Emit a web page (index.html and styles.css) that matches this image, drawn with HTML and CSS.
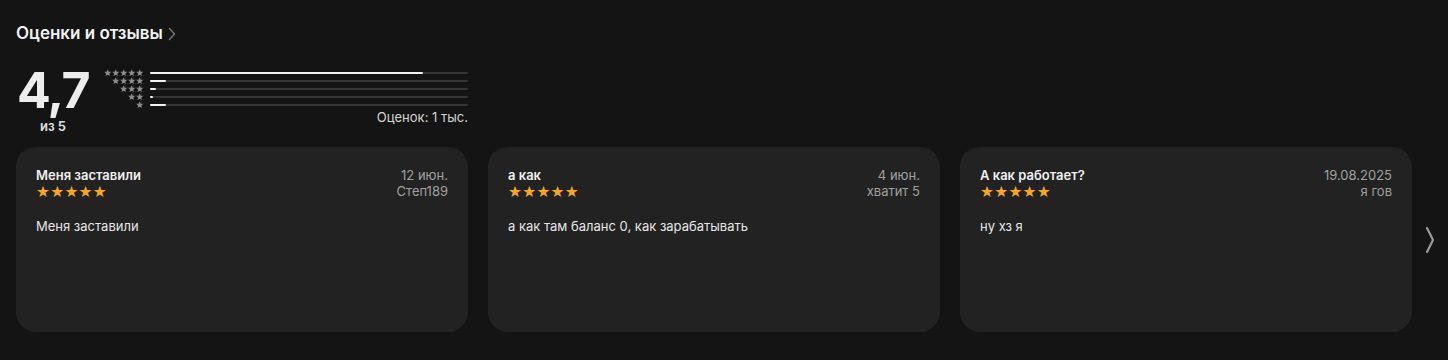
FILE: index.html
```html
<!DOCTYPE html>
<html lang="ru">
<head>
    <meta charset="UTF-8">
    <meta name="viewport" content="width=device-width, initial-scale=1.0">
    <title>Оценки и отзывы</title>
    <link rel="stylesheet" href="styles.css">
</head>
<body>
    <svg width="0" height="0" class="sprite">
        <defs>
            <symbol id="star" viewBox="0 0 10 10">
                <path d="M5 0.4 L6.35 3.55 L9.7 3.8 L7.15 6 L7.95 9.35 L5 7.6 L2.05 9.35 L2.85 6 L0.3 3.8 L3.65 3.55 Z"/>
            </symbol>
        </defs>
    </svg>
    <div class="section">
        <h2 class="section-title">Оценки и отзывы
            <svg class="title-chevron" width="8" height="14" viewBox="0 0 8 14"><path d="M1.5 1.5 L6.5 7 L1.5 12.5" fill="none" stroke="#6e6e6e" stroke-width="1.6" stroke-linecap="round" stroke-linejoin="round"/></svg>
        </h2>

        <div class="summary">
            <div class="score">
                <div class="score-value">4,7</div>
                <div class="score-max">из 5</div>
            </div>
            <div class="histogram">
                <div class="hist-rows">
                    <div class="hist-row">
                        <svg class="hist-stars" width="40" height="8" viewBox="0 0 40 8"><use href="#star" x="0" width="7.5" height="7.5"/><use href="#star" x="8" width="7.5" height="7.5"/><use href="#star" x="16" width="7.5" height="7.5"/><use href="#star" x="24" width="7.5" height="7.5"/><use href="#star" x="32" width="7.5" height="7.5"/></svg>
                        <div class="bar"><div class="bar-fill" style="width: 86%"></div></div>
                    </div>
                    <div class="hist-row">
                        <svg class="hist-stars" width="40" height="8" viewBox="0 0 40 8"><use href="#star" x="8" width="7.5" height="7.5"/><use href="#star" x="16" width="7.5" height="7.5"/><use href="#star" x="24" width="7.5" height="7.5"/><use href="#star" x="32" width="7.5" height="7.5"/></svg>
                        <div class="bar"><div class="bar-fill" style="width: 5%"></div></div>
                    </div>
                    <div class="hist-row">
                        <svg class="hist-stars" width="40" height="8" viewBox="0 0 40 8"><use href="#star" x="16" width="7.5" height="7.5"/><use href="#star" x="24" width="7.5" height="7.5"/><use href="#star" x="32" width="7.5" height="7.5"/></svg>
                        <div class="bar"><div class="bar-fill" style="width: 2%"></div></div>
                    </div>
                    <div class="hist-row">
                        <svg class="hist-stars" width="40" height="8" viewBox="0 0 40 8"><use href="#star" x="24" width="7.5" height="7.5"/><use href="#star" x="32" width="7.5" height="7.5"/></svg>
                        <div class="bar"><div class="bar-fill" style="width: 1%"></div></div>
                    </div>
                    <div class="hist-row">
                        <svg class="hist-stars" width="40" height="8" viewBox="0 0 40 8"><use href="#star" x="32" width="7.5" height="7.5"/></svg>
                        <div class="bar"><div class="bar-fill" style="width: 5%"></div></div>
                    </div>
                </div>
                <div class="hist-count">Оценок: 1 тыс.</div>
            </div>
        </div>

        <div class="reviews">
            <div class="review">
                <div class="review-head">
                    <div>
                        <div class="review-title">Меня заставили</div>
                        <div class="review-stars">★★★★★</div>
                    </div>
                    <div class="review-meta">
                        <div>12 июн.</div>
                        <div>Степ189</div>
                    </div>
                </div>
                <p class="review-text">Меня заставили</p>
            </div>
            <div class="review">
                <div class="review-head">
                    <div>
                        <div class="review-title">а как</div>
                        <div class="review-stars">★★★★★</div>
                    </div>
                    <div class="review-meta">
                        <div>4 июн.</div>
                        <div>хватит 5</div>
                    </div>
                </div>
                <p class="review-text">а как там баланс 0, как зарабатывать</p>
            </div>
            <div class="review">
                <div class="review-head">
                    <div>
                        <div class="review-title">А как работает?</div>
                        <div class="review-stars">★★★★★</div>
                    </div>
                    <div class="review-meta">
                        <div>19.08.2025</div>
                        <div>я гов</div>
                    </div>
                </div>
                <p class="review-text">ну хз я</p>
            </div>
            <div class="next">
                <svg width="10" height="28" viewBox="0 0 10 28"><path d="M2 2 L8 14 L2 26" fill="none" stroke="#9a9a9a" stroke-width="2.2" stroke-linecap="round" stroke-linejoin="round"/></svg>
            </div>
        </div>
    </div>
</body>
</html>
```

FILE: styles.css
```css
body {
    margin: 0;
    background-color: #141414;
    color: #f2f2f2;
    font-family: Inter, "Noto Sans", sans-serif;
}
.sprite {
    position: absolute;
}
.section {
    padding: 22px 16px 28px 16px;
}
.section-title {
    margin: 0;
    font-size: 17px;
    font-weight: 600;
    line-height: 22px;
    display: flex;
    align-items: center;
    gap: 5px;
}
.title-chevron {
    margin-top: 1px;
}
.summary {
    display: flex;
    margin-top: 20px;
    width: 452px;
}
.score {
    width: 74px;
    display: flex;
    flex-direction: column;
    align-items: center;
}
.score-value {
    font-size: 50px;
    font-weight: 700;
    line-height: 52px;
    letter-spacing: -1.5px;
    color: #ededed;
}
.score-max {
    font-size: 13px;
    font-weight: 600;
    color: #e0e0e0;
    line-height: 16px;
    margin-top: 2px;
}
.histogram {
    flex: 1;
    margin-left: 14px;
    padding-top: 5px;
}
.hist-rows {
    display: flex;
    flex-direction: column;
}
.hist-row {
    display: flex;
    align-items: center;
    height: 8px;
}
.hist-stars {
    display: block;
    fill: #8c8c8c;
}
.bar {
    flex: 1;
    height: 2px;
    margin-left: 6px;
    background-color: #333333;
    border-radius: 1px;
}
.bar-fill {
    height: 100%;
    background-color: #f2f2f2;
    border-radius: 1px;
}
.hist-count {
    text-align: right;
    font-size: 13px;
    color: #d6d6d6;
    line-height: 16px;
}
.reviews {
    display: flex;
    gap: 20px;
    margin-top: 13px;
    align-items: center;
}
.review {
    flex-shrink: 0;
    width: 452px;
    height: 185px;
    box-sizing: border-box;
    background-color: #222222;
    border-radius: 20px;
    padding: 19px 20px;
}
.review-head {
    display: flex;
    justify-content: space-between;
}
.review-title {
    font-size: 13px;
    font-weight: 600;
    color: #f0f0f0;
    line-height: 18px;
}
.review-stars {
    color: #f5a623;
    font-size: 15.5px;
    line-height: 16px;
    letter-spacing: 0.3px;
    font-family: "DejaVu Sans", sans-serif;
}
.review-meta {
    text-align: right;
    font-size: 13px;
    color: #a0a0a0;
    line-height: 16px;
    padding-top: 1px;
}
.review-text {
    margin: 18px 0 0 0;
    font-size: 13px;
    color: #e6e6e6;
    line-height: 16px;
}
.next {
    flex-shrink: 0;
    display: flex;
    align-items: center;
    margin-left: -7px;
}
```
